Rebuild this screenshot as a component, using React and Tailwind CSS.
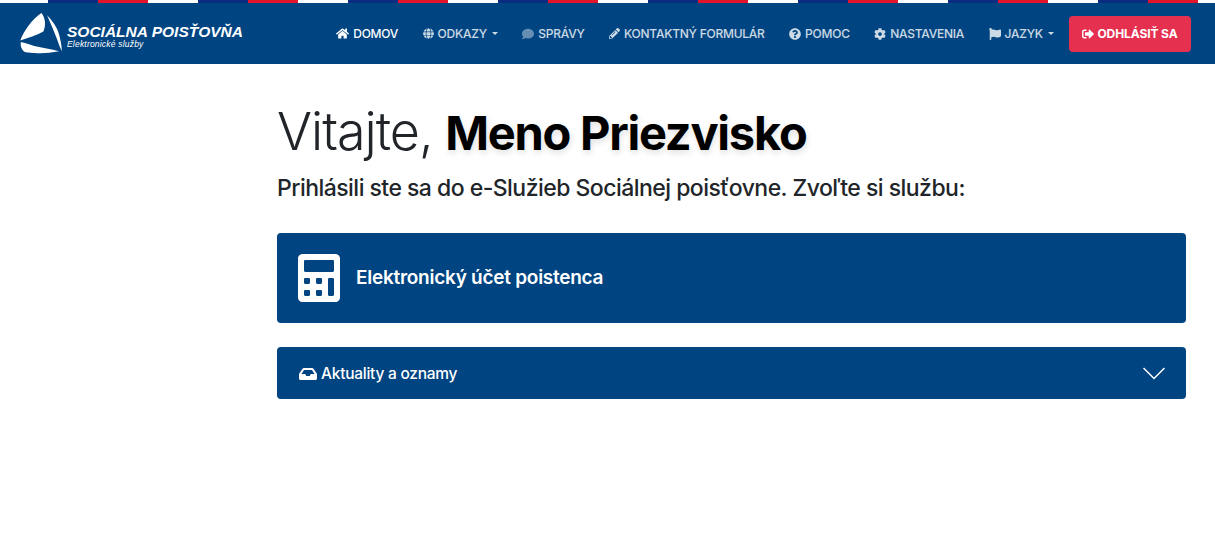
import React from "react";
import { FaHome, FaGlobe, FaComment, FaPencilAlt, FaQuestionCircle, FaCog, FaFlag, FaSignOutAlt, FaCalculator, FaInbox } from "react-icons/fa";

function Caret() {
  return <span className="ml-[1px] inline-block border-x-[3px] border-t-[3px] border-x-transparent border-t-current" />;
}

function NavItem({ icon, label, active, caret }) {
  return (
    <a className={`flex items-center gap-[4px] px-[12.25px] ${active ? "text-white" : "text-white/80"}`}>
      {icon}
      <span>{label}</span>
      {caret && <Caret />}
    </a>
  );
}

function Logo() {
  return (
    <div className="flex items-center gap-[5px]">
      <svg width="42" height="41" viewBox="1.5 0 39.5 41" preserveAspectRatio="none" fill="white">
        <path d="M21.7 0 C25.5 5 26 13 23.5 18.5 C17 22.5 9 24.5 1.8 27.5 C5 18 13 6 21.7 0 Z" />
        <path d="M27 2.3 C32 8 36 14 37.5 19 C39.5 26 40.8 32 40.8 38.3 C38 32 36.5 26 34 20 C32 14 29 8 27 2.3 Z" />
        <path d="M2.3 29 C8 30 11 32 15 33 C22 35 31 36 38.3 38.3 C30 40 22 40.5 15 40 C10 40 6 39.5 5 38.3 C3 36 1.5 33 2.3 29 Z" />
      </svg>
      <div className="mt-[6px] flex flex-col font-['Liberation_Sans',sans-serif] italic text-white">
        <span className="text-[15.5px] leading-[16px] font-bold whitespace-nowrap">SOCIÁLNA POISŤOVŇA</span>
        <span className="text-[8.5px] leading-[9px] tracking-[0.2px] whitespace-nowrap">Elektronické služby</span>
      </div>
    </div>
  );
}

export default function App() {
  return (
    <div className="min-h-[538px] bg-white font-['Inter',sans-serif] text-[#212529]">
      <div className="h-[3px] bg-[repeating-linear-gradient(90deg,#ffffff_0,#ffffff_48px,#0a2d82_48px,#0a2d82_98px,#e1162b_98px,#e1162b_148px,#ffffff_148px,#ffffff_150px)]" />
      <nav className="flex h-[61px] items-center justify-between bg-[#004481] pl-[20px] pr-[24px]">
        <Logo />
        <div className="flex items-center text-[12px] font-medium uppercase tracking-[-0.25px]">
          <NavItem active icon={<FaHome className="text-[13px]" />} label="Domov" />
          <NavItem icon={<FaGlobe className="text-[11px]" />} label="Odkazy" caret />
          <NavItem icon={<FaComment className="text-[12px] text-white/40" />} label="Správy" />
          <NavItem icon={<FaPencilAlt className="text-[11px]" />} label="Kontaktný formulár" />
          <NavItem icon={<FaQuestionCircle className="text-[12px]" />} label="Pomoc" />
          <NavItem icon={<FaCog className="text-[12px]" />} label="Nastavenia" />
          <NavItem icon={<FaFlag className="text-[12px]" />} label="Jazyk" caret />
          <button className="ml-[3px] flex h-[36px] w-[122px] items-center justify-center gap-[3px] rounded bg-[#e5304f] text-[12px] font-bold uppercase tracking-[-0.1px] text-white">
            <FaSignOutAlt className="text-[12px]" />
            Odhlásiť sa
          </button>
        </div>
      </nav>
      <main className="ml-[277px] mr-[29px] pt-[32px]">
        <h1 className="text-[52px] leading-[72px] font-light tracking-[-1px] whitespace-nowrap">
          Vitajte, <b className="-ml-[1px] text-[47px] font-bold tracking-[-1.25px] text-black [text-shadow:1px_3px_6px_rgba(0,0,0,0.12)]">Meno Priezvisko</b>
        </h1>
        <p className="mt-[3px] text-[23px] leading-[33px] font-medium tracking-[-0.53px]">Prihlásili ste sa do e-Služieb Sociálnej poisťovne. Zvoľte si službu:</p>
        <a className="mt-[28px] flex h-[90px] items-center gap-[13px] rounded bg-[#004481] pl-[21px] text-white">
          <FaCalculator className="-ml-[3px] text-[48px]" />
          <span className="pt-[1px] text-[19px] font-semibold tracking-[-0.26px]">Elektronický účet poistenca</span>
        </a>
        <div className="mt-[24px] flex h-[52px] items-center justify-between rounded bg-[#004481] pl-[22px] pr-[21px] text-white">
          <div className="flex items-center gap-[4px] pt-[1px] text-[15.5px] font-medium tracking-[-0.25px]">
            <FaInbox className="text-[18px]" />
            Aktuality a oznamy
          </div>
          <svg width="22" height="13" viewBox="0 0 22 13" fill="none" stroke="white" strokeWidth="1.5">
            <path d="M0.5 1 L11 11.5 L21.5 1" />
          </svg>
        </div>
      </main>
    </div>
  );
}
